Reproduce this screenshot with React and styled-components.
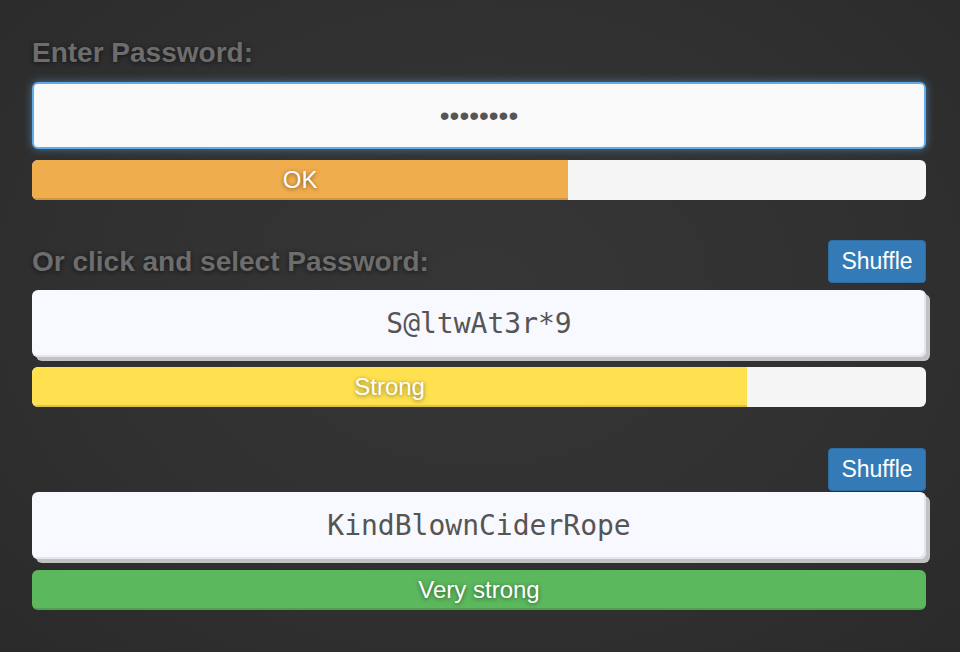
import React from "react";
import styled, { createGlobalStyle } from "styled-components";

const Global = createGlobalStyle`
  html, body { margin: 0; padding: 0; }
  body {
    width: 960px;
    height: 652px;
    overflow: hidden;
    background: radial-gradient(ellipse at 50% 45%, #363636 0%, #313131 55%, #2a2a2a 100%);
    font-family: "Liberation Sans", Arial, sans-serif;
  }
`;

const Page = styled.main`
  width: 894px;
  padding: 37px 34px 0 32px;
  display: flex;
  flex-direction: column;
`;

const Section = styled.section`
  display: flex;
  flex-direction: column;
  margin-top: ${(p) => p.$top || 0}px;
`;

const Label = styled.label`
  font-size: 28px;
  line-height: 31px;
  font-weight: bold;
  color: #6d6d6d;
  text-shadow: 0 1px 5px rgba(0, 0, 0, 0.6);
`;

const HeaderRow = styled.div`
  display: flex;
  align-items: center;
  justify-content: space-between;
  height: 43px;
  margin-bottom: ${(p) => p.$gap}px;
`;

const PasswordInput = styled.input`
  box-sizing: border-box;
  margin-top: 14px;
  width: 894px;
  height: 67px;
  border: 2px solid #62aaea;
  border-radius: 6px;
  background: #f9f9f9;
  box-shadow: 0 0 9px rgba(102, 175, 233, 0.55);
  outline: none;
  text-align: center;
  font-family: "Liberation Sans", Arial, sans-serif;
  font-size: 28px;
  color: #555;
  padding: 0 12px;
`;

const Suggestion = styled.div`
  box-sizing: border-box;
  width: 894px;
  height: 67px;
  border-radius: 6px;
  background: #f8f8ff;
  box-shadow: inset -2px -2px 0 #e5e5ee, 4px 4px 0 #c2c2c2;
  display: flex;
  align-items: center;
  justify-content: center;
  font-family: "DejaVu Sans Mono", "Liberation Mono", monospace;
  font-size: 28px;
  color: #555;
  cursor: pointer;
  user-select: all;
`;

const Track = styled.div`
  margin-top: ${(p) => p.$top}px;
  height: 40px;
  border-radius: 6px;
  background: #f5f5f5;
  overflow: hidden;
  display: flex;
`;

const Fill = styled.div`
  height: 100%;
  background: ${(p) => p.$color};
  box-shadow: inset 0 -2px 0 rgba(0, 0, 0, 0.13);
  display: flex;
  align-items: center;
  justify-content: center;
  font-size: 24px;
  color: #fff;
  text-shadow: 0 1px 4px rgba(0, 0, 0, 0.5);
`;

const ShuffleButton = styled.button`
  margin-left: auto;
  width: 98px;
  height: 43px;
  border: 1px solid #2e6da4;
  border-radius: 4px;
  background: #337ab7;
  color: #fff;
  font-family: "Liberation Sans", Arial, sans-serif;
  font-size: 23px;
  padding: 0;
  cursor: pointer;
`;

const Strength = ({ pct, color, label, top }) => (
  <Track $top={top}>
    <Fill $color={color} style={{ width: `${pct}%` }}>
      {label}
    </Fill>
  </Track>
);

export default function App() {
  return (
    <>
      <Global />
      <Page>
        <Section>
          <Label htmlFor="pw">Enter Password:</Label>
          <PasswordInput id="pw" type="password" defaultValue="password" readOnly />
          <Strength pct={60} color="#f0ad4e" label="OK" top={11} />
        </Section>
        <Section $top={40}>
          <HeaderRow $gap={7}>
            <Label>Or click and select Password:</Label>
            <ShuffleButton>Shuffle</ShuffleButton>
          </HeaderRow>
          <Suggestion>S@ltwAt3r*9</Suggestion>
          <Strength pct={80} color="#ffe14f" label="Strong" top={10} />
        </Section>
        <Section $top={41}>
          <HeaderRow $gap={1}>
            <ShuffleButton>Shuffle</ShuffleButton>
          </HeaderRow>
          <Suggestion>KindBlownCiderRope</Suggestion>
          <Strength pct={100} color="#5cb85c" label="Very strong" top={11} />
        </Section>
      </Page>
    </>
  );
}
